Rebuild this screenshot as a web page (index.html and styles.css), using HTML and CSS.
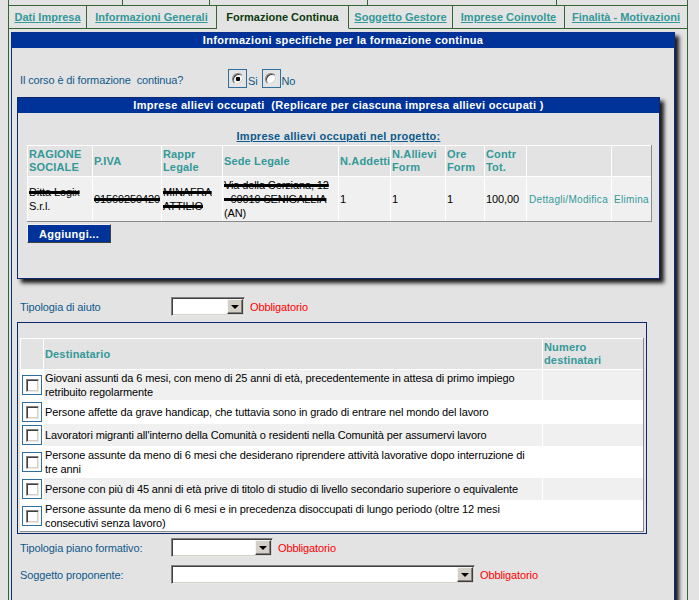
FILE: index.html
```html
<!DOCTYPE html>
<html lang="it">
<head>
<meta charset="utf-8">
<title>Formazione Continua</title>
<link rel="stylesheet" href="styles.css">
</head>
<body>
<div class="frame">
  <div class="toprow"><span></span><span></span><span></span><span></span><span></span></div>
  <div class="tabs">
    <a class="tab" href="#">Dati Impresa</a>
    <a class="tab" href="#">Informazioni Generali</a>
    <span class="tab active">Formazione Continua</span>
    <a class="tab" href="#">Soggetto Gestore</a>
    <a class="tab" href="#">Imprese Coinvolte</a>
    <a class="tab" href="#">Finalità - Motivazioni</a>
  </div>
  <div class="panel main">
    <div class="bar mainbar">Informazioni specifiche per la formazione continua</div>
    <div class="question">
      <span class="qlabel">Il corso è di formazione&nbsp; continua?</span>
      <span class="choice"><span class="radiobox"><span class="radio checked"></span></span><span class="ctext">Si</span></span>
      <span class="choice"><span class="radiobox"><span class="radio"></span></span><span class="ctext">No</span></span>
    </div>

    <div class="sub">
      <div class="bar subbar">Imprese allievi occupati&nbsp; (Replicare per ciascuna impresa allievi occupati )</div>
      <div class="subtitle"><a href="#">Imprese allievi occupati nel progetto:</a></div>
      <table class="grid imprese">
        <thead>
          <tr>
            <th>RAGIONE SOCIALE</th><th>P.IVA</th><th>Rappr Legale</th><th>Sede Legale</th><th>N.Addetti</th><th>N.Allievi Form</th><th>Ore Form</th><th>Contr Tot.</th><th></th><th></th>
          </tr>
        </thead>
        <tbody>
          <tr>
            <td><span class="redact">Ditta Logix</span><br>S.r.l.</td>
            <td><span class="redact">01569250420</span></td>
            <td><span class="redact">MINAFRA</span><br><span class="redact">ATTILIO</span></td>
            <td><span class="redact">Via della Cerziana, 12</span><br><span class="redact">- 60019 SENIGALLIA</span><br>(AN)</td>
            <td>1</td><td>1</td><td>1</td><td>100,00</td>
            <td><a class="act" href="#">Dettagli/Modifica</a></td>
            <td><a class="act" href="#">Elimina</a></td>
          </tr>
        </tbody>
      </table>
      <button class="btn" type="button">Aggiungi...</button>
    </div>

    <div class="field f1">
      <span class="flabel">Tipologia di aiuto</span>
      <span class="sel sel-s"><span class="arrow"></span></span>
      <span class="req">Obbligatorio</span>
    </div>

    <div class="dest">
      <table class="grid desttab">
        <thead>
          <tr><th></th><th>Destinatario</th><th>Numero destinatari</th></tr>
        </thead>
        <tbody>
          <tr><td class="chk"><span class="cbframe"><span class="cb"></span></span></td><td>Giovani assunti da 6 mesi, con meno di 25 anni di età, precedentemente in attesa di primo impiego<br>retribuito regolarmente</td><td></td></tr>
          <tr><td class="chk"><span class="cbframe"><span class="cb"></span></span></td><td>Persone affette da grave handicap, che tuttavia sono in grado di entrare nel mondo del lavoro</td><td></td></tr>
          <tr><td class="chk"><span class="cbframe"><span class="cb"></span></span></td><td>Lavoratori migranti all'interno della Comunità o residenti nella Comunità per assumervi lavoro</td><td></td></tr>
          <tr><td class="chk"><span class="cbframe"><span class="cb"></span></span></td><td>Persone assunte da meno di 6 mesi che desiderano riprendere attività lavorative dopo interruzione di<br>tre anni</td><td></td></tr>
          <tr><td class="chk"><span class="cbframe"><span class="cb"></span></span></td><td>Persone con più di 45 anni di età prive di titolo di studio di livello secondario superiore o equivalente</td><td></td></tr>
          <tr><td class="chk"><span class="cbframe"><span class="cb"></span></span></td><td>Persone assunte da meno di 6 mesi e in precedenza disoccupati di lungo periodo (oltre 12 mesi<br>consecutivi senza lavoro)</td><td></td></tr>
        </tbody>
      </table>
    </div>

    <div class="field f2">
      <span class="flabel">Tipologia piano formativo:</span>
      <span class="sel sel-m"><span class="arrow"></span></span>
      <span class="req">Obbligatorio</span>
    </div>
    <div class="field f3">
      <span class="flabel">Soggetto proponente:</span>
      <span class="sel sel-l"><span class="arrow"></span></span>
      <span class="req">Obbligatorio</span>
    </div>
  </div>
</div>
</body>
</html>
```

FILE: styles.css
```css
* { box-sizing: border-box; }

html, body {
  margin: 0;
  padding: 0;
  background: #e3e3e3;
}

body {
  font-family: "Liberation Sans", Arial, Helvetica, sans-serif;
  font-size: 11px;
  color: #000;
  letter-spacing: -0.12px;
}

a { color: inherit; }

.frame {
  margin-left: 8px;
  width: 680px;
  height: 600px;
  overflow: hidden;
  border-left: 1px solid #336633;
  border-right: 1px solid #336633;
}

/* partially visible upper row */
.toprow {
  display: grid;
  grid-template-columns: 114px 87px 158px 189px 1fr;
  height: 6px;
  border-bottom: 1px solid #336633;
}
.toprow span { border-right: 1px solid #336633; }
.toprow span:last-child { border-right: 0; }

/* tabs */
.tabs {
  display: grid;
  grid-template-columns: 78px 130px 132px 104px 112px 1fr;
  height: 23px;
}
.tab {
  display: flex;
  align-items: center;
  justify-content: center;
  border-right: 1px solid #336633;
  border-bottom: 1px solid #336633;
  font-weight: bold;
  color: #339999;
  text-decoration: underline;
  white-space: nowrap;
  letter-spacing: 0;
}
.tab:last-child { border-right: 0; }
.tab.active {
  color: #0b3a0b;
  text-decoration: none;
  border-bottom-color: transparent;
}

/* main panel */
.main {
  margin: 3px 12px 0 2px;
  border: 1px solid #0a2f8a;
  box-shadow: 4px 4px 4px #1a1a1a;
  padding-bottom: 60px;
}

.bar {
  background: #003399;
  color: #fff;
  font-weight: bold;
  text-align: center;
  letter-spacing: 0.3px;
  white-space: nowrap;
}
.mainbar { height: 15px; line-height: 15px; }

.question {
  display: flex;
  align-items: flex-end;
  height: 19px;
  margin: 21px 0 0 8px;
  color: #10598a;
}
.qlabel {
  width: 208px;
  align-self: center;
  line-height: 13px;
  padding-top: 3px;
}
.choice {
  display: flex;
  align-items: flex-end;
  margin-right: 4px;
}
.ctext { line-height: 13px; margin-left: 1px; }

.radiobox {
  width: 19px;
  height: 19px;
  border: 1px solid #2f6f9f;
  display: flex;
  align-items: center;
  justify-content: center;
}
.radio {
  width: 12px;
  height: 12px;
  border-radius: 50%;
  background: #fff;
  border: 1px solid;
  border-color: #808080 #e8e8e8 #e8e8e8 #808080;
  box-shadow: inset 1px 1px 0 #404040, inset -1px -1px 0 #d4d0c8;
}
.radio.checked {
  background: radial-gradient(circle, #000 0 2px, #fff 2.6px);
}

/* sub panel */
.sub {
  margin: 9px 14px 0 5px;
  border: 1px solid #0b2a6e;
  box-shadow: 4px 4px 4px #1a1a1a;
  padding-bottom: 35px;
}
.subbar { height: 15px; line-height: 15px; }

.subtitle {
  margin-top: 17px;
  line-height: 13px;
  text-align: center;
  font-weight: bold;
  letter-spacing: 0.25px;
  color: #0d5a8c;
}

/* grids */
.grid {
  border-collapse: separate;
  border-spacing: 0;
  table-layout: fixed;
  background: #e3e3e3;
  border-right: 1px solid #8a8a8a;
  border-bottom: 1px solid #8a8a8a;
}
.grid th, .grid td {
  border-left: 1px solid #fff;
  border-top: 1px solid #fff;
  padding: 0 1px;
  text-align: left;
  vertical-align: middle;
}
.grid th {
  font-weight: bold;
  color: #339999;
  line-height: 13px;
  letter-spacing: 0.15px;
}

.imprese {
  width: 625px;
  margin: 2px 0 0 9px;
}
.imprese th { height: 31px; }
.imprese td {
  height: 45px;
  background: #f0f0f0;
  line-height: 14px;
  white-space: nowrap;
}
.imprese th:nth-child(1) { width: 65px; }
.imprese th:nth-child(2) { width: 69px; }
.imprese th:nth-child(3) { width: 61px; }
.imprese th:nth-child(4) { width: 116px; }
.imprese th:nth-child(5) { width: 52px; }
.imprese th:nth-child(6) { width: 55px; }
.imprese th:nth-child(7) { width: 39px; }
.imprese th:nth-child(8) { width: 42px; }
.imprese th:nth-child(9) { width: 85px; }
.imprese th:nth-child(10) { width: 40px; }

.redact {
  text-decoration: line-through;
  text-decoration-thickness: 3px;
  text-decoration-color: #000;
}

.act {
  color: #339999;
  text-decoration: none;
  font-size: 10px;
  letter-spacing: 0.3px;
  padding-left: 1px;
}

.btn {
  display: block;
  margin: 2px 0 0 9px;
  width: 84px;
  height: 19px;
  padding: 0;
  background: #003399;
  color: #fff;
  font-family: "Liberation Sans", Arial, sans-serif;
  font-size: 11px;
  font-weight: bold;
  letter-spacing: 0.3px;
  border: 1px solid;
  border-color: #f0f0f0 #404040 #404040 #f0f0f0;
}

/* form fields */
.field {
  display: flex;
  align-items: center;
  margin-left: 8px;
  color: #10598a;
}
.f1 { margin-top: 18px; }
.f2 { margin-top: 4px; }
.f3 { margin-top: 8px; }
.flabel { width: 151px; }
.req { color: #ff0000; margin-left: 5px; }

.sel {
  display: flex;
  justify-content: flex-end;
  height: 19px;
  padding: 1px;
  background: #fff;
  border: 1px solid;
  border-color: #808080 #e8e8e8 #e8e8e8 #808080;
  box-shadow: inset 1px 1px 0 #404040, inset -1px -1px 0 #d4d0c8;
}
.sel-s { width: 74px; }
.sel-m { width: 102px; }
.sel-l { width: 304px; }

.arrow {
  width: 16px;
  height: 15px;
  background: #d4d0c8;
  border: 1px solid;
  border-color: #f4f4f4 #404040 #404040 #f4f4f4;
  box-shadow: inset -1px -1px 0 #808080;
  display: flex;
  align-items: center;
  justify-content: center;
}
.arrow::before {
  content: "";
  border-left: 4px solid transparent;
  border-right: 4px solid transparent;
  border-top: 4px solid #000;
}

/* destinatari */
.dest {
  margin: 6px 27px 0 5px;
  border: 1px solid #0b2a6e;
  padding: 15px 2px 1px 2px;
}
.desttab { width: 624px; }
.desttab th { height: 31px; }
.desttab th:nth-child(1) { width: 23px; }
.desttab th:nth-child(2) { width: 499px; }
.desttab th:nth-child(3) { width: 101px; }
.desttab td {
  line-height: 14px;
  padding: 1px 1px;
  white-space: nowrap;
  background: #fff;
}
.desttab tbody tr:nth-child(odd) td { background: #f0f0f0; }
.desttab tbody tr td.chk { background: #fff; }

.cbframe {
  display: flex;
  align-items: center;
  justify-content: center;
  width: 20px;
  height: 20px;
  border: 1px solid #2f6f9f;
}
.cb {
  width: 13px;
  height: 13px;
  background: #fff;
  border: 1px solid;
  border-color: #808080 #e8e8e8 #e8e8e8 #808080;
  box-shadow: inset 1px 1px 0 #404040, inset -1px -1px 0 #d4d0c8;
}
```
